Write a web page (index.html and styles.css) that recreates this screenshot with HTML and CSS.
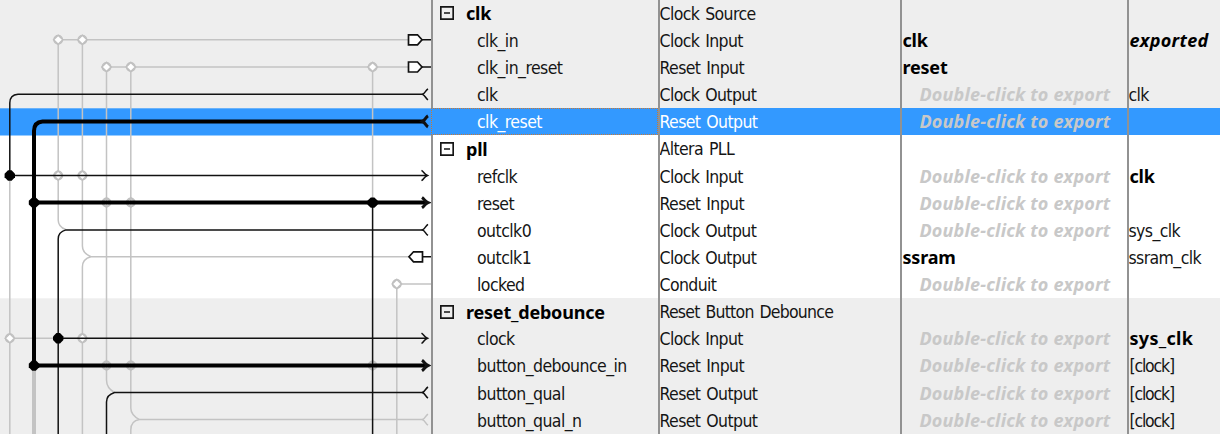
FILE: index.html
```
<!DOCTYPE html>
<html lang="en">
<head>
<meta charset="utf-8">
<title>System Contents</title>
<link rel="stylesheet" href="styles.css">
</head>
<body>
<main class="contents">
<svg class="wires" width="431" height="434" viewBox="0 0 431 434">
  <defs>
    <g id="open"><circle r="4.2" /><path d="M0-4.6 4.6 0 0 4.6-4.6 0z"/></g>
    <path id="dot" d="M-1.8-5.2H1.8L5.2-1.8V1.8L1.8 5.2H-1.8L-5.2 1.8V-1.8z"/>
    <path id="tag" d="M-6-5H3L7.5 0 3 5H-6z"/>
    <path id="fork" d="M5.5-5.5C3-4 3-1.500 0 0 3 1.500 3 4 5.500 5.500"/>
    <path id="head" d="M-6-5.200C-3.500-3.500-3.500-1.500 0 0-3.500 1.500-3.500 3.500-6 5.200"/>
  </defs>
  <rect class="band" width="431" height="109"/>
  <rect class="band" y="298.300" width="431" height="136"/>
  <rect class="picked" y="108.300" width="431" height="27.200"/>
  <g class="idle">
    <path d="M58 39.800H408M106.500 67H408M58.200 40V220Q58.200 227 66 229.700M82.400 40V246Q82.400 253 91 256.800H410M91 256.800Q82.400 259 82.400 267V434M106.500 67V380Q106.500 388 114.500 392.500M130.800 67V408Q130.800 415 139.500 419.600H423M139.500 419.600Q130.800 421 130.800 430V434M372.600 67V202M9.800 175V434M9.800 338.300H58M396.800 434V284H431"/>
    <path class="bus" d="M34 365V434"/>
    <use href="#fork" x="422.500" y="419.600"/>
  </g>
  <g class="pins">
    <use href="#open" x="58.200" y="39.800"/><use href="#open" x="82.400" y="39.800"/>
    <use href="#open" x="106.500" y="67"/><use href="#open" x="130.800" y="67"/><use href="#open" x="372.600" y="67"/>
    <use href="#open" x="58.200" y="175.500"/><use href="#open" x="82.400" y="175.500"/>
    <use href="#open" x="396.800" y="284"/>
    <use href="#open" x="9.800" y="338.300"/><use href="#open" x="82.400" y="338.300"/>
  </g>
  <g class="pins faint">
    <use href="#open" x="106.500" y="202.500"/><use href="#open" x="130.800" y="202.500"/>
    <use href="#open" x="106.500" y="365.500"/><use href="#open" x="130.800" y="365.500"/><use href="#open" x="372.600" y="365.500"/>
  </g>
  <g class="live">
    <path d="M423 94.300H18Q9.800 95 9.800 103V175.500H427M423 229.900H66Q58.200 232 58.200 239V434M58.200 338.300H427M423 392.500H114.500Q106.500 395 106.500 402V434M372.600 202V434"/>
    <path class="bus" d="M424 121.400H42.500Q34 122 34 131V365.500H427M34 202.600H427"/>
    <use href="#fork" x="422.500" y="94.300"/><use href="#fork" x="422.500" y="229.900"/><use href="#fork" x="422.500" y="392.500"/>
    <use class="heavy" href="#fork" x="422.500" y="121.400"/>
    <use href="#head" x="427.500" y="175.500"/><use href="#head" x="427.500" y="338.300"/>
    <use class="heavy" href="#head" x="428" y="202.600"/><use class="heavy" href="#head" x="428" y="365.500"/>
    <path d="M422 39.800H431M422 67H431M422 256.800H431"/>
  </g>
  <g class="tags">
    <use href="#tag" x="414.500" y="39.800"/><use href="#tag" x="414.500" y="67"/>
    <use href="#tag" transform="translate(416.500 256.800) scale(-1 1)"/>
  </g>
  <use href="#dot" x="9.800" y="175.500"/><use href="#dot" x="34" y="202.600"/><use href="#dot" x="372.600" y="202.600"/>
  <use href="#dot" x="58.200" y="338.300"/><use href="#dot" x="34" y="365.500"/>
</svg>
<div class="grid">
  <div class="row band"><div class="name module"><svg class="toggle" viewBox="0 0 14 14"><path d="M.8.800H13.200V13.200H.8zM4 7H10"/></svg><b>clk</b></div><div>Clock Source</div><div></div><div></div></div>
  <div class="row band"><div class="name">clk_in</div><div>Clock Input</div><div><b>clk</b></div><div><b class="ext">exported</b></div></div>
  <div class="row band"><div class="name">clk_in_reset</div><div>Reset Input</div><div><b>reset</b></div><div></div></div>
  <div class="row band"><div class="name">clk</div><div>Clock Output</div><div class="hint">Double-click to export</div><div>clk</div></div>
  <div class="row picked"><div class="name">clk_reset</div><div>Reset Output</div><div class="hint">Double-click to export</div><div></div></div>
  <div class="row"><div class="name module"><svg class="toggle" viewBox="0 0 14 14"><path d="M.8.800H13.200V13.200H.8zM4 7H10"/></svg><b>pll</b></div><div>Altera PLL</div><div></div><div></div></div>
  <div class="row"><div class="name">refclk</div><div>Clock Input</div><div class="hint">Double-click to export</div><div><b>clk</b></div></div>
  <div class="row"><div class="name">reset</div><div>Reset Input</div><div class="hint">Double-click to export</div><div></div></div>
  <div class="row"><div class="name">outclk0</div><div>Clock Output</div><div class="hint">Double-click to export</div><div>sys_clk</div></div>
  <div class="row"><div class="name">outclk1</div><div>Clock Output</div><div><b>ssram</b></div><div>ssram_clk</div></div>
  <div class="row"><div class="name">locked</div><div>Conduit</div><div class="hint">Double-click to export</div><div></div></div>
  <div class="row band"><div class="name module"><svg class="toggle" viewBox="0 0 14 14"><path d="M.8.800H13.200V13.200H.8zM4 7H10"/></svg><b>reset_debounce</b></div><div class="long">Reset Button Debounce</div><div></div><div></div></div>
  <div class="row band"><div class="name">clock</div><div>Clock Input</div><div class="hint">Double-click to export</div><div><b class="wide">sys_clk</b></div></div>
  <div class="row band"><div class="name">button_debounce_in</div><div>Reset Input</div><div class="hint">Double-click to export</div><div class="derived">[clock]</div></div>
  <div class="row band"><div class="name">button_qual</div><div>Reset Output</div><div class="hint">Double-click to export</div><div class="derived">[clock]</div></div>
  <div class="row band"><div class="name">button_qual_n</div><div>Reset Output</div><div class="hint">Double-click to export</div><div class="derived">[clock]</div></div>
</div>
</main>
</body>
</html>
```
FILE: styles.css
```
body { margin: 0; background: #fff; color: #151515; font-family: "DejaVu Sans Condensed", sans-serif; font-size: 17.5px; letter-spacing: -0.6px; word-spacing: 1.5px; }
.contents { display: flex; width: 1220px; height: 434px; overflow: hidden; }
.wires { flex: none; display: block; }
rect.band { fill: #eee; }
rect.picked { fill: #39f; }
.idle { fill: none; stroke: #c3c3c3; stroke-width: 1.5; }
.live { fill: none; stroke: #111; stroke-width: 1.5; }
.idle .bus, .live .bus { stroke-width: 4; }
.live .bus { stroke: #000; }
.live .heavy { stroke-width: 3; }
.pins { fill: #fff; stroke: #c0c0c0; stroke-width: 1.5; }
.pins.faint { fill: none; }
.tags { fill: #fff; stroke: #111; stroke-width: 1.7; }
.grid { flex: none; width: 789px; margin-top: -0.2px; }
.row { display: grid; grid-template-columns: 226.500px 242px 227px 93.500px; height: 27.130px; line-height: 28.5px; white-space: nowrap; }
.row > div { box-sizing: border-box; height: 27.130px; border-left: 2px solid #929292; overflow: hidden; }
.row > .name { padding-left: 44px; letter-spacing: -0.55px; }
.row > .module { display: flex; align-items: center; gap: 12px; padding-left: 7px; }
.row.band { background: #eee; }
.row.picked { background: #39f; color: #fff; }
.row.picked > .name { border: 1px dotted #c87936; padding-left: 45px; line-height: 26.5px; }
.row > .long { letter-spacing: -0.75px; }
.toggle { width: 14px; height: 14px; fill: none; stroke: #151515; stroke-width: 1.7; }
b, .row > .hint { font-family: "Noto Sans", sans-serif; font-size: 18px; line-height: 26.5px; word-spacing: 0; }
b { display: block; color: #000; letter-spacing: -0.2px; }
.row b:only-child { margin-left: 1px; }
.row .wide { letter-spacing: 0.3px; }
.ext { font-style: italic; letter-spacing: 0.3px; }
.row > .hint { padding-left: 18px; color: #c8c8c8; font-weight: 700; font-style: italic; letter-spacing: 0.17px; }
.row > .derived { padding-left: 1px; letter-spacing: -1.2px; }
```
